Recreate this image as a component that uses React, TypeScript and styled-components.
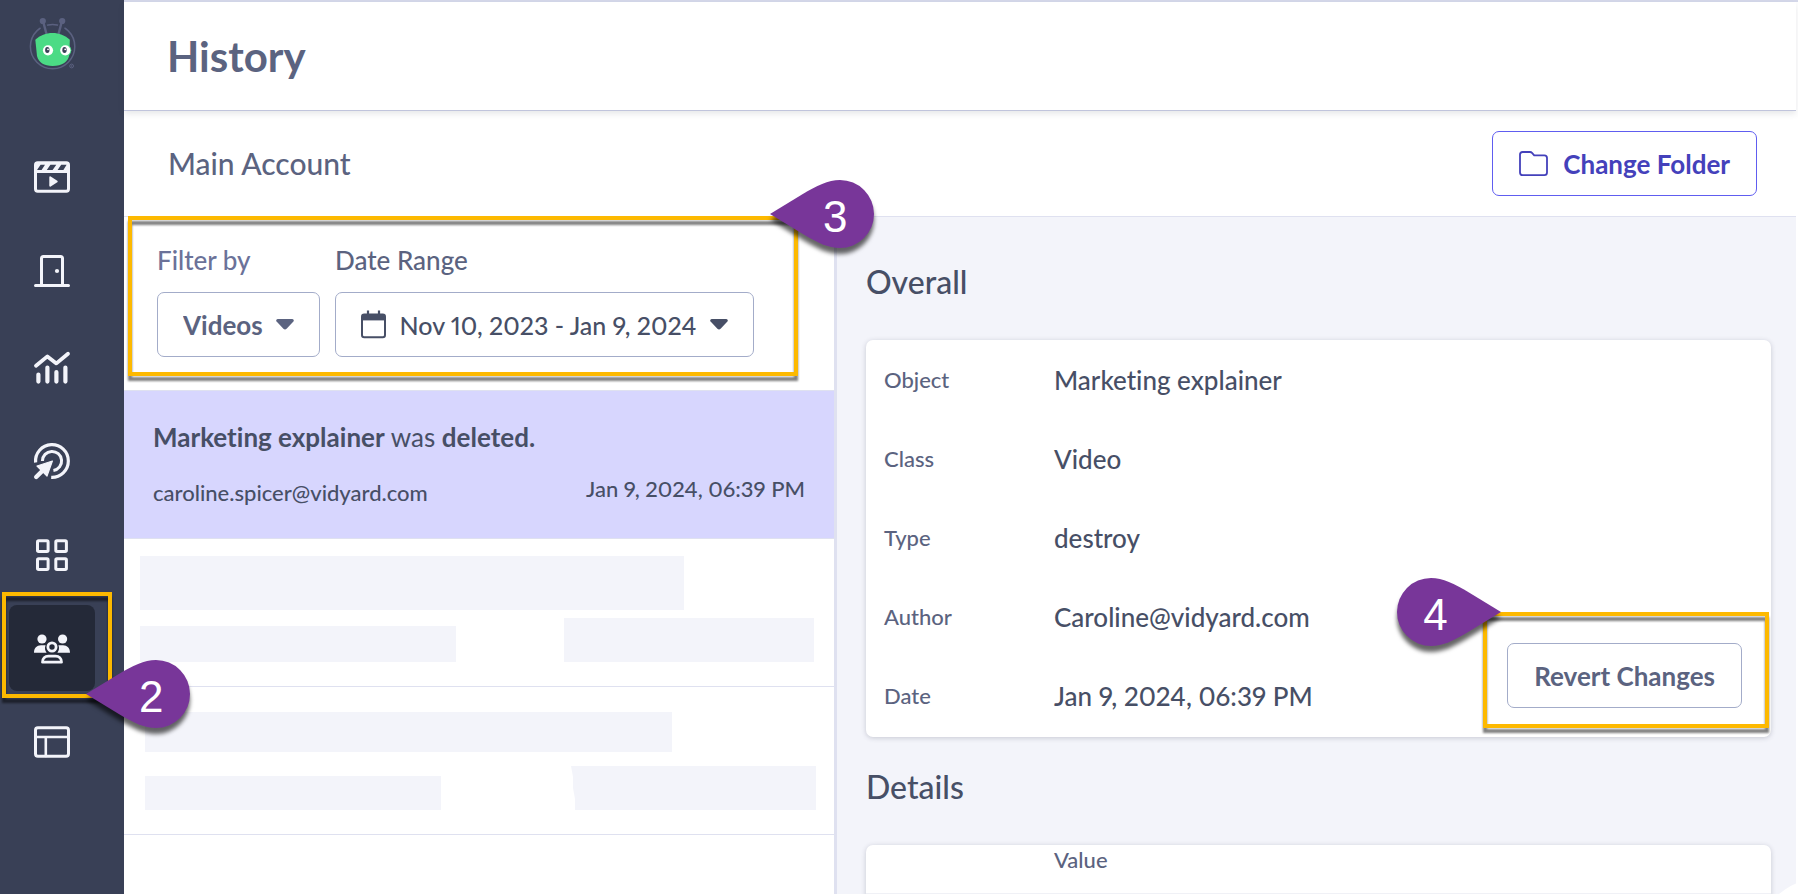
import React from 'react';
import styled, { createGlobalStyle } from 'styled-components';

const color = {
  sidebar: '#394056',
  sidebarActive: '#242938',
  icon: '#f3f4fa',
  text: '#474f66',
  muted: '#5b6380',
  label: '#6b7299',
  border: '#a3acc9',
  line: '#dfe1f0',
  canvas: '#f3f4fa',
  selected: '#d7d6fe',
  accent: '#4441bb',
  accentBorder: '#605df0',
  callout: '#783699',
  highlight: '#fdb900',
};

const mediumFont = '"Lato Medium", Lato, "Liberation Sans", sans-serif';

const GlobalStyle = createGlobalStyle`
  *, *::before, *::after { box-sizing: border-box; }
  body {
    margin: 0;
    background: #fff;
    color: ${color.text};
    font-family: Lato, "Liberation Sans", sans-serif;
    font-size: 26px;
    line-height: 32px;
    font-variant-numeric: proportional-nums;
    font-variant-ligatures: none;
  }
  button, select { font: inherit; font-variant-numeric: inherit; margin: 0; cursor: pointer; }
  h1, h2, p, dl, dd, ul { margin: 0; padding: 0; }
  ul { list-style: none; }
  svg { display: block; flex: none; overflow: visible; }
`;

/* ---------- Page frame ---------- */

const Shell = styled.div`
  display: flex;
  height: 100vh;
  overflow: hidden;
`;

const Sidebar = styled.nav`
  flex: none;
  width: 124px;
  padding: 16px 0 0 9px;
  background: ${color.sidebar};
`;

const LogoLink = styled.a`
  display: flex;
  justify-content: center;
  width: 86px;
  margin-bottom: 63px;
`;

const NavList = styled.ul`
  display: flex;
  flex-direction: column;
  gap: 8px;
`;

const NavItem = styled.li`
  position: relative;
  width: 86px;
`;

const NavLink = styled.a<{ $active?: boolean }>`
  display: flex;
  align-items: center;
  justify-content: center;
  height: 86px;
  border-radius: 8px;
  color: ${color.icon};
  background: ${(p) => (p.$active ? color.sidebarActive : 'transparent')};
`;

const Main = styled.main`
  flex: 1;
  min-width: 0;
  display: flex;
  flex-direction: column;
  border-top: 2px solid #d5d8ea;
`;

const TitleBar = styled.header`
  display: flex;
  align-items: center;
  height: 109px;
  margin-right: 2px;
  padding: 0 43px;
  border-bottom: 1px solid #c0c4dc;
  box-shadow: 0 3px 6px rgba(57, 64, 86, 0.12);
  z-index: 1;
`;

const PageTitle = styled.h1`
  color: ${color.muted};
  font-size: 42px;
  line-height: 52px;
  font-weight: 700;
`;

const AccountBar = styled.div`
  display: flex;
  align-items: center;
  justify-content: space-between;
  margin-right: 2px;
  padding: 20px 39px 20px 44px;
  border-bottom: 1px solid ${color.line};
`;

const AccountName = styled.p`
  padding-bottom: 2px;
  color: ${color.muted};
  font-family: ${mediumFont};
  font-size: 30px;
`;

const Columns = styled.div`
  flex: 1;
  min-height: 0;
  display: grid;
  grid-template-columns: minmax(0, 713fr) minmax(0, 959fr);
  margin-right: 2px;
`;

/* ---------- Controls ---------- */

const Button = styled.button<{ $tone?: 'accent' | 'muted' }>`
  display: inline-flex;
  align-items: center;
  gap: 15px;
  height: 65px;
  padding: 0 26px;
  border: 1px solid ${(p) => (p.$tone === 'accent' ? color.accentBorder : color.border)};
  border-radius: 7px;
  background: #fff;
  color: ${(p) => (p.$tone === 'accent' ? color.accent : color.muted)};
  font-weight: 700;
  white-space: nowrap;
`;

const RangeButton = styled(Button)`
  justify-content: space-between;
  gap: 0;
  width: 419px;
  padding: 0 25px;
  color: ${color.text};
  font-family: ${mediumFont};
  font-size: 25px;
  font-weight: 500;
`;

const Field = styled.div`
  display: flex;
  flex-direction: column;
  align-items: flex-start;
  gap: 16px;
`;

const FieldLabel = styled.label<{ $soft?: boolean }>`
  color: ${(p) => (p.$soft ? color.label : color.muted)};
  font-family: ${mediumFont};
`;

const SelectBox = styled.div`
  display: grid;
  align-items: center;
  width: 163px;
  color: ${color.muted};

  > * { grid-area: 1 / 1; }
  > svg { justify-self: end; margin-right: 26px; pointer-events: none; }
`;

const Select = styled.select`
  appearance: none;
  width: 100%;
  height: 65px;
  padding: 0 50px 0 25px;
  border: 1px solid ${color.border};
  border-radius: 7px;
  background: #fff;
  color: inherit;
  font-weight: 700;
`;

/* ---------- History list ---------- */

const ListPane = styled.section`
  border-right: 3px solid ${color.line};
  background: #fff;
`;

const Filters = styled.div`
  position: relative;
  display: flex;
  gap: 15px;
  padding: 27px 33px 33px;
  border-bottom: 1px solid ${color.line};
`;

const Entry = styled.li<{ $selected?: boolean }>`
  height: 148px;
  padding: 30px 29px 0;
  border-bottom: 1px solid ${color.line};
  background: ${(p) => (p.$selected ? color.selected : '#fff')};
`;

const EntryMeta = styled.div`
  display: flex;
  justify-content: space-between;
  height: 32px;
  margin-top: 22px;
  font-family: ${mediumFont};
  font-size: 22px;
  line-height: 28px;
  font-weight: 500;
`;

const EntryAuthor = styled.span`
  align-self: flex-end;
`;

const EntryDate = styled.time`
  align-self: flex-start;
`;

const LoadingEntry = styled.li<{ $pad: string }>`
  display: flex;
  flex-direction: column;
  justify-content: space-between;
  height: 148px;
  padding: ${(p) => p.$pad};
  border-bottom: 1px solid ${color.line};
`;

const LoadingRow = styled.div`
  display: flex;
  align-items: flex-end;
  justify-content: space-between;
`;

const LoadingBar = styled.span<{ $w: number; $h: number; $torn?: boolean }>`
  width: ${(p) => p.$w}px;
  height: ${(p) => p.$h}px;
  background: ${color.canvas};
  ${(p) => p.$torn && 'clip-path: polygon(0 0, 100% 0, 100% 100%, 4px 100%, 4px 75%, 2px 50%, 2px 25%);'}
`;

/* ---------- Detail pane ---------- */

const DetailPane = styled.section`
  display: flex;
  flex-direction: column;
  min-height: 0;
  padding: 45px 25px 0 29px;
  background: ${color.canvas};
`;

const SectionTitle = styled.h2`
  font-family: ${mediumFont};
  font-size: 32px;
  line-height: 40px;
  font-weight: 500;
`;

const Card = styled.div`
  display: flex;
  flex: none;
  align-items: flex-end;
  justify-content: space-between;
  margin: 38px 0 30px;
  border-radius: 7px;
  background: #fff;
  box-shadow: 0 1px 5px rgba(57, 64, 86, 0.24);
`;

const Properties = styled.dl`
  flex: 1;
  padding: 0 0 2px 18px;
`;

const Property = styled.div`
  display: grid;
  grid-template-columns: 170px 1fr;
  align-items: center;
  height: 79px;
`;

const PropertyName = styled.dt`
  color: ${color.muted};
  font-family: ${mediumFont};
  font-size: 22px;
`;

const PropertyValue = styled.dd`
  font-family: ${mediumFont};
  font-weight: 500;
`;

const CardAction = styled.div`
  position: relative;
  margin: 0 29px 29px 0;
`;

const ValueTable = styled.table`
  width: 100%;
  height: 120px;
  border-collapse: collapse;
  table-layout: fixed;
`;

const KeyColumn = styled.col`
  width: 188px;
`;

const HeadCell = styled.th`
  height: 48px;
  padding: 2px 0 0;
  border-bottom: 1px solid #f0f1f6;
  color: ${color.muted};
  font-family: ${mediumFont};
  font-size: 22px;
  line-height: 26px;
  font-weight: 500;
  text-align: left;
  vertical-align: top;
`;

const BodyCell = styled.td`
  padding: 0;
`;

const ChatBubble = styled.div`
  position: fixed;
  right: -101px;
  bottom: -129px;
  width: 146px;
  height: 146px;
  border-radius: 50%;
  background: #fff;
`;

/* ---------- Tutorial callouts ---------- */

const Highlight = styled.div<{ $x: number; $y: number; $w: number; $h: number }>`
  position: absolute;
  left: ${(p) => p.$x}px;
  top: ${(p) => p.$y}px;
  width: ${(p) => p.$w}px;
  height: ${(p) => p.$h}px;
  border: 4px solid ${color.highlight};
  filter: drop-shadow(0 5px 1px rgba(0, 0, 0, 0.5));
  pointer-events: none;
  z-index: 2;
`;

const PinBox = styled.div<{ $x: number; $y: number; $flip?: boolean }>`
  position: absolute;
  left: ${(p) => p.$x}px;
  top: ${(p) => p.$y}px;
  display: grid;
  align-items: center;
  width: 104px;
  height: 68px;
  color: #fff;
  font-family: "Liberation Sans", sans-serif;
  font-size: 44px;
  pointer-events: none;
  z-index: 3;

  > * { grid-area: 1 / 1; }
  > svg { transform: ${(p) => (p.$flip ? 'scaleX(-1)' : 'none')}; filter: drop-shadow(0 6px 2px rgba(0, 0, 0, 0.6)); }
  > span { z-index: 1; padding: ${(p) => (p.$flip ? '6px 0 0 26px' : '6px 0 0 53px')}; }
`;

function Pin({ x, y, flip, children }: { x: number; y: number; flip?: boolean; children: React.ReactNode }) {
  return (
    <PinBox $x={x} $y={y} $flip={flip}>
      <svg width="104" height="68" viewBox="0 0 104 68" aria-hidden="true">
        <path d="M0 34 L32 14.5 C47 5.5 58 0 70 0 A34 34 0 0 1 70 68 C58 68 47 62.5 32 53.5 Z" fill={color.callout} />
      </svg>
      <span>{children}</span>
    </PinBox>
  );
}

/* ---------- Icons ---------- */

const Glyph = ({ children }: { children: React.ReactNode }) => (
  <svg width="36" height="36" viewBox="0 0 36 36" fill="none" stroke="currentColor" strokeWidth="3" strokeLinecap="round" strokeLinejoin="round" aria-hidden="true">
    {children}
  </svg>
);

const Logo = () => (
  <svg width="50" height="56" viewBox="27 16 50 56" aria-hidden="true">
    <circle cx="52.6" cy="46.6" r="22.2" fill="none" stroke="#5b6180" strokeWidth="1.5" />
    <path d="M41.5 22 L48 35 M63.5 22 L57 35" stroke={color.sidebar} strokeWidth="7" />
    <path d="M43 21 L46.5 34 M62 21 L58.5 34" stroke="#5b6180" strokeWidth="2.4" />
    <circle cx="42.8" cy="21" r="3.1" fill="#5b6180" />
    <circle cx="62.2" cy="21" r="3.1" fill="#5b6180" />
    <path d="M35.3 39.8 C40 35.2 46 33 52.6 33 C59 33 65 35.2 69.8 39.8 L69.4 54 C68.6 62 62 66 52.6 66 C44 66 38.6 62.5 37 56 Z" fill="#4bdb85" />
    <circle cx="65.3" cy="50.3" r="6" fill="#4bdb85" />
    <circle cx="48" cy="50.3" r="5.1" fill="#fff" />
    <circle cx="65.3" cy="50.3" r="5.1" fill="#fff" />
    <ellipse cx="47.3" cy="50" rx="2.2" ry="3" fill={color.sidebar} />
    <ellipse cx="64.5" cy="50" rx="2.2" ry="3" fill={color.sidebar} />
    <circle cx="48" cy="49.3" r="0.9" fill="#fff" />
    <circle cx="65.2" cy="49.3" r="0.9" fill="#fff" />
    <circle cx="71.6" cy="66" r="1.9" fill="none" stroke="#5b6180" />
    <circle cx="71.6" cy="66" r="0.7" fill="#5b6180" />
  </svg>
);

const VideosIcon = () => (
  <Glyph>
    <rect x="1.5" y="2.8" width="33" height="28.4" rx="2.2" />
    <path d="M2 3.5 H34 V13 H2 Z" fill="currentColor" stroke="none" />
    <path d="M3.3 10 L3.3 9.5 L6.6 4.7 H11 L7.6 10 Z M12.8 10 L16.4 4.7 H22.3 L18.6 10 Z M23.6 10 L27.2 4.7 H32.6 L29.4 10 Z" fill={color.sidebar} stroke="none" />
    <path d="M16.2 17.2 L22.8 21.4 L16.2 25.8 Z" fill="currentColor" strokeWidth="1.8" />
  </Glyph>
);

const DoorIcon = () => (
  <Glyph>
    <path d="M1.5 31.5 H34.5 M7.5 31 V4.5 Q7.5 2.5 9.5 2.5 H26.5 Q28.5 2.5 28.5 4.5 V31" />
    <circle cx="23" cy="17" r="2.1" fill="currentColor" stroke="none" />
  </Glyph>
);

const AnalyticsIcon = () => (
  <Glyph>
    <path d="M2 17.8 L13.4 8.4 L22.4 15.4 L34 5.8" strokeWidth="3.8" />
    <path d="M4.4 26.6 V33.6 M13.4 19.6 V33.6 M22.4 24 V33.6 M31.4 19.6 V33.6" strokeWidth="4.2" />
  </Glyph>
);

const TargetIcon = () => (
  <Glyph>
    <path d="M1.6 20.5 A16.4 16.4 0 1 1 17.2 35.4" strokeLinecap="butt" strokeWidth="3.2" />
    <path d="M8.4 19 A9.6 9.6 0 1 1 19.4 28.5" strokeLinecap="butt" />
    <path d="M18.4 19 L3 24 L13 34 Z" fill="currentColor" strokeWidth="1.2" />
    <path d="M2.2 35 L9 28.2" strokeWidth="4.4" />
  </Glyph>
);

const GridIcon = () => (
  <Glyph>
    <rect x="3.5" y="4.8" width="10.6" height="10.6" rx="1.2" />
    <rect x="21.8" y="4.8" width="10.6" height="10.6" rx="1.2" />
    <rect x="3.5" y="22.8" width="10.6" height="10.6" rx="1.2" />
    <rect x="21.8" y="22.8" width="10.6" height="10.6" rx="1.2" />
  </Glyph>
);

const PeopleIcon = () => (
  <Glyph>
    <g fill="currentColor" stroke="none">
      <circle cx="8" cy="9" r="4.6" />
      <circle cx="28.6" cy="9" r="4.6" />
      <path d="M0 22.7 C0 18.2 2.8 15.3 7 15.3 H11.6 C10.4 18 11 20.6 12.6 22.7 Z" />
      <path d="M36 22.7 C36 18.2 33.2 15.3 29 15.3 H24.4 C25.6 18 25 20.6 23.4 22.7 Z" />
    </g>
    <circle cx="18" cy="17" r="4.1" strokeWidth="2.8" />
    <path d="M8.5 32.2 C8.5 28.4 11 26.2 14.4 26.2 H21.6 C25 26.2 27.5 28.4 27.5 32.2 Z" strokeWidth="2.8" />
  </Glyph>
);

const LayoutIcon = () => (
  <Glyph>
    <rect x="1.5" y="3.8" width="33" height="28.4" rx="2.4" />
    <path d="M2 13 H34 M11.8 13 V32" strokeWidth="2.6" />
  </Glyph>
);

const FolderIcon = () => (
  <svg width="29" height="25" viewBox="0 0 29 25" fill="none" stroke="currentColor" strokeWidth="1.8" strokeLinejoin="round" aria-hidden="true">
    <path d="M3.6 1 H11 Q12.2 1 13 1.9 L15.2 4.4 H25.4 Q28 4.4 28 7 V21.6 Q28 24.2 25.4 24.2 H3.6 Q1 24.2 1 21.6 V3.6 Q1 1 3.6 1 Z" />
  </svg>
);

const CalendarIcon = () => (
  <svg width="25" height="29" viewBox="0 0 25 29" fill="none" stroke="currentColor" strokeWidth="2" aria-hidden="true">
    <rect x="1" y="4.6" width="23" height="22.6" rx="2.2" />
    <path d="M1 5 H24 V10.4 H1 Z" fill="currentColor" stroke="none" />
    <path d="M7 0.5 V6 M18 0.5 V6" strokeWidth="2.2" />
  </svg>
);

const Caret = () => (
  <svg width="18" height="11" viewBox="0 0 18 11" aria-hidden="true">
    <path d="M1.6 0 H16.4 Q18.6 0.6 17.4 2.6 L10.6 9.8 Q9 11.4 7.4 9.8 L0.6 2.6 Q-0.6 0.6 1.6 0 Z" fill="currentColor" />
  </svg>
);

/* ---------- Content ---------- */

const navigation = [
  { name: 'Videos', Icon: VideosIcon },
  { name: 'Rooms', Icon: DoorIcon },
  { name: 'Analytics', Icon: AnalyticsIcon },
  { name: 'Goals', Icon: TargetIcon },
  { name: 'Apps', Icon: GridIcon },
  { name: 'Team', Icon: PeopleIcon, active: true },
  { name: 'Pages', Icon: LayoutIcon },
];

const properties = [
  ['Object', 'Marketing explainer'],
  ['Class', 'Video'],
  ['Type', 'destroy'],
  ['Author', 'Caroline@vidyard.com'],
  ['Date', 'Jan 9, 2024, 06:39 PM'],
];

export default function App() {
  return (
    <>
      <GlobalStyle />
      <Shell>
        <Sidebar aria-label="Main">
          <LogoLink href="#home" aria-label="Home">
            <Logo />
          </LogoLink>
          <NavList>
            {navigation.map(({ name, Icon, active }) => (
              <NavItem key={name}>
                <NavLink href={`#${name.toLowerCase()}`} aria-label={name} $active={active}>
                  <Icon />
                </NavLink>
                {active && (
                  <>
                    <Highlight $x={-7} $y={-13} $w={110} $h={106} />
                    <Pin x={77} y={55}>2</Pin>
                  </>
                )}
              </NavItem>
            ))}
          </NavList>
        </Sidebar>

        <Main>
          <TitleBar>
            <PageTitle>History</PageTitle>
          </TitleBar>
          <AccountBar>
            <AccountName>Main Account</AccountName>
            <Button type="button" $tone="accent">
              <FolderIcon />
              Change Folder
            </Button>
          </AccountBar>

          <Columns>
            <ListPane>
              <Filters>
                <Field>
                  <FieldLabel htmlFor="filter" $soft>Filter by</FieldLabel>
                  <SelectBox>
                    <Select id="filter" defaultValue="Videos">
                      <option>Videos</option>
                    </Select>
                    <Caret />
                  </SelectBox>
                </Field>
                <Field>
                  <FieldLabel htmlFor="range">Date Range</FieldLabel>
                  <RangeButton id="range" type="button">
                    <CalendarIcon />
                    Nov 10, 2023 - Jan 9, 2024
                    <Caret />
                  </RangeButton>
                </Field>
                <Highlight $x={4} $y={-1} $w={670} $h={160} />
                <Pin x={646} y={-37}>3</Pin>
              </Filters>

              <ul>
                <Entry $selected>
                  <p>
                    <b>Marketing explainer</b> was <b>deleted.</b>
                  </p>
                  <EntryMeta>
                    <EntryAuthor>caroline.spicer@vidyard.com</EntryAuthor>
                    <EntryDate>Jan 9, 2024, 06:39 PM</EntryDate>
                  </EntryMeta>
                </Entry>
                <LoadingEntry $pad="17px 20px 24px 16px">
                  <LoadingBar $w={544} $h={54} />
                  <LoadingRow>
                    <LoadingBar $w={316} $h={36} />
                    <LoadingBar $w={250} $h={44} />
                  </LoadingRow>
                </LoadingEntry>
                <LoadingEntry $pad="25px 18px 24px 21px">
                  <LoadingBar $w={527} $h={40} />
                  <LoadingRow>
                    <LoadingBar $w={296} $h={34} />
                    <LoadingBar $w={245} $h={44} $torn />
                  </LoadingRow>
                </LoadingEntry>
              </ul>
            </ListPane>

            <DetailPane>
              <SectionTitle>Overall</SectionTitle>
              <Card>
                <Properties>
                  {properties.map(([name, value]) => (
                    <Property key={name}>
                      <PropertyName>{name}</PropertyName>
                      <PropertyValue>{value}</PropertyValue>
                    </Property>
                  ))}
                </Properties>
                <CardAction>
                  <Button type="button" $tone="muted">Revert Changes</Button>
                  <Highlight $x={-24} $y={-31} $w={286} $h={116} />
                  <Pin x={-110} y={-65} flip>4</Pin>
                </CardAction>
              </Card>
              <SectionTitle>Details</SectionTitle>
              <Card>
                <ValueTable>
                  <colgroup>
                    <KeyColumn />
                    <col />
                  </colgroup>
                  <thead>
                    <tr>
                      <HeadCell />
                      <HeadCell scope="col">Value</HeadCell>
                    </tr>
                  </thead>
                  <tbody>
                    <tr>
                      <BodyCell />
                      <BodyCell />
                    </tr>
                  </tbody>
                </ValueTable>
              </Card>
            </DetailPane>
          </Columns>
        </Main>
      </Shell>
      <ChatBubble />
    </>
  );
}
